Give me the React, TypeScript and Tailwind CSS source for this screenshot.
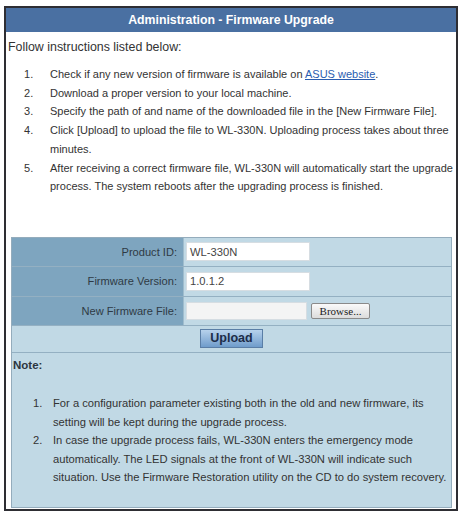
import React from "react";

const steps: React.ReactNode[] = [
  <>
    Check if any new version of firmware is available on{" "}
    <a className="text-[#2a5db0] underline">ASUS website</a>.
  </>,
  <>Download a proper version to your local machine.</>,
  <>Specify the path of and name of the downloaded file in the [New Firmware File].</>,
  <>
    Click [Upload] to upload the file to WL-330N. Uploading process takes about three
    minutes.
  </>,
  <>
    After receiving a correct firmware file, WL-330N will automatically start the upgrade
    process. The system reboots after the upgrading process is finished.
  </>,
];

const notes: string[] = [
  "For a configuration parameter existing both in the old and new firmware, its setting will be kept during the upgrade process.",
  "In case the upgrade process fails, WL-330N enters the emergency mode automatically. The LED signals at the front of WL-330N will indicate such situation. Use the Firmware Restoration utility on the CD to do system recovery.",
];

function Row({ label, children, h }: { label: string; children: React.ReactNode; h: string }) {
  return (
    <div className={`flex border-b border-[#94b0c2] ${h}`}>
      <div className="flex w-[171px] shrink-0 items-center justify-end bg-[#7ea5bf] pr-[6px] text-[11.1px] text-[#2f3a44]">
        {label}
      </div>
      <div className="flex flex-1 items-center gap-[4px] border-l border-[#9fbccd] pl-[2px]">
        {children}
      </div>
    </div>
  );
}

export default function App() {
  return (
    <div
      className="h-[515px] w-[462px] bg-white pl-[4px] pt-[6px] text-[11.2px] text-[#333]"
      style={{ fontFamily: '"Liberation Sans", Arial, sans-serif' }}
    >
      <div className="h-[505px] w-[454px] border-2 border-[#2e2e33] bg-white">
        <div className="flex h-[24px] items-center justify-center bg-[#4a70a2] text-[12.3px] font-bold text-white">
          Administration - Firmware Upgrade
        </div>

        <div className="pl-[2px] pt-[6px] text-[12.4px] leading-[19px]">
          Follow instructions listed below:
        </div>

        <ol className="mt-[8px] pl-[18px] text-[11px] leading-[18.7px]">
          {steps.map((s, i) => (
            <li key={i} className="flex">
              <span className="w-[26px] shrink-0">{i + 1}.</span>
              <span>{s}</span>
            </li>
          ))}
        </ol>

        <div className="ml-[5px] mr-[4px] mt-[41px] border border-[#94acbc] bg-[#c1d9e5]">
          <Row label="Product ID:" h="h-[29px]">
            <div className="flex h-[19px] w-[124px] items-center border border-[#d6dde2] bg-white pl-[3px] text-[#444]">
              WL-330N
            </div>
          </Row>
          <Row label="Firmware Version:" h="h-[30px]">
            <div className="flex h-[19px] w-[124px] items-center border border-[#d6dde2] bg-white pl-[3px] text-[#444]">
              1.0.1.2
            </div>
          </Row>
          <Row label="New Firmware File:" h="h-[29px]">
            <div className="h-[18px] w-[121px] border border-[#d6dde2] bg-[#f4f4f4]" />
            <button
              className="flex h-[16px] w-[59px] items-center justify-center rounded-[2px] border border-[#8a8a8a] bg-gradient-to-b from-[#fafafa] to-[#dcdcdc] text-[11px] text-[#222]"
              style={{ fontFamily: '"Liberation Serif", "Times New Roman", serif' }}
            >
              Browse...
            </button>
          </Row>
          <div className="flex h-[27px] items-center justify-center border-b border-[#94b0c2]">
            <button className="h-[19px] w-[63px] border border-[#5a7ea6] bg-gradient-to-b from-[#b7d2ec] to-[#6f9ccb] text-[12.5px] font-bold leading-[17px] text-[#1d2c48]">
              Upload
            </button>
          </div>
          <div className="h-[154px] pt-[3px]">
            <div className="pl-[1px] text-[11.5px] font-bold leading-[19px] text-[#2d3640]">Note:</div>
            <ol className="mt-[19px] pl-[21px] pr-[4px] leading-[18.6px]">
              {notes.map((n, i) => (
                <li key={i} className="flex">
                  <span className="w-[20px] shrink-0">{i + 1}.</span>
                  <span>{n}</span>
                </li>
              ))}
            </ol>
          </div>
        </div>
      </div>
    </div>
  );
}
